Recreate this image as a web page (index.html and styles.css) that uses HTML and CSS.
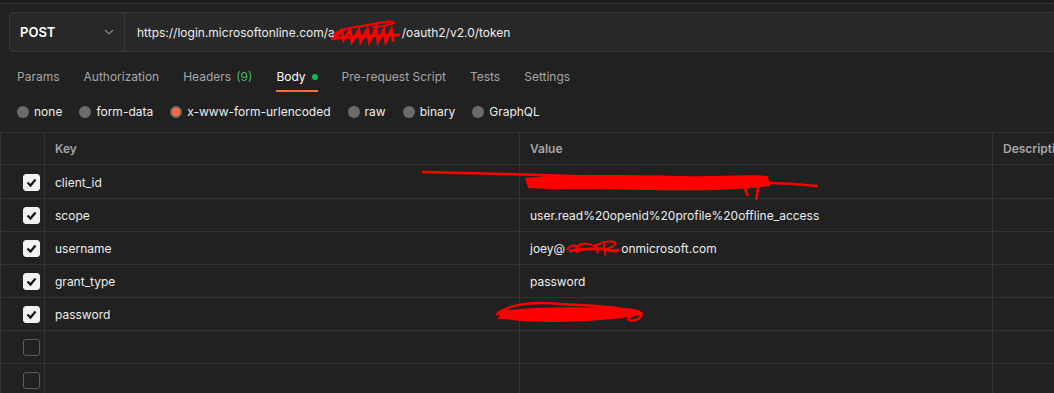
FILE: index.html
```html
<!DOCTYPE html>
<html lang="en">
<head>
  <meta charset="UTF-8" />
  <title>POST token request</title>
  <link rel="stylesheet" href="styles.css">
</head>
<body>

<!-- Top edge -->
<div class="top-strip"></div>

<!-- Request line -->
<div class="request-bar">
  <div class="method">
    <span>POST</span>
    <svg class="chevron" width="10" height="6" viewBox="0 0 10 6">
      <polyline points="1,1 5,5 9,1" fill="none" stroke="#8a8a8a" stroke-width="1.1"/>
    </svg>
  </div>
  <div class="url">https://login.microsoftonline.com/a<span class="redact">
    <svg width="74" height="28" viewBox="0 0 74 28">
      <path d="M2 17 C10 12 20 9 30 8 C42 6 52 4 60 3 C66 3 68 5 62 6 C54 8 48 9 42 9" fill="none" stroke="#ff0000" stroke-width="2"/>
      <path d="M4 20 L11 12 L13 22 L20 12 L22 24 L29 12 L31 24 L38 11 L40 24 L47 10 L49 24 L55 12 L57 24 L63 12 L65 24" fill="none" stroke="#ff0000" stroke-width="3"/>
      <path d="M0 21 C20 19 40 18 72 17" fill="none" stroke="#ff0000" stroke-width="3"/>
    </svg></span>/oauth2/v2.0/token</div>
</div>

<!-- Tabs -->
<nav class="tabs">
  <span class="tab">Params</span>
  <span class="tab">Authorization</span>
  <span class="tab">Headers <em class="count">(9)</em></span>
  <span class="tab active">Body <i class="dot"></i></span>
  <span class="tab">Pre-request Script</span>
  <span class="tab">Tests</span>
  <span class="tab">Settings</span>
</nav>

<!-- Body type -->
<div class="body-types">
  <label class="radio"><i class="circle"></i>none</label>
  <label class="radio"><i class="circle"></i>form-data</label>
  <label class="radio"><i class="circle on"></i>x-www-form-urlencoded</label>
  <label class="radio"><i class="circle"></i>raw</label>
  <label class="radio"><i class="circle"></i>binary</label>
  <label class="radio"><i class="circle"></i>GraphQL</label>
</div>

<!-- Key / value table -->
<div class="kv-table">
  <div class="cell head"></div>
  <div class="cell head">Key</div>
  <div class="cell head">Value</div>
  <div class="cell head">Descripti</div>

  <div class="cell check"><i class="box on"></i></div>
  <div class="cell">client_id</div>
  <div class="cell"></div>
  <div class="cell"></div>

  <div class="cell check"><i class="box on"></i></div>
  <div class="cell">scope</div>
  <div class="cell">user.read%20openid%20profile%20offline_access</div>
  <div class="cell"></div>

  <div class="cell check"><i class="box on"></i></div>
  <div class="cell">username</div>
  <div class="cell">joey@<span class="redact small">
    <svg width="58" height="20" viewBox="0 0 58 20">
      <path d="M2 12 C6 6 12 6 14 11 C16 15 10 16 12 10 C14 5 24 4 30 8 L40 4 C50 2 56 4 50 8 C44 11 40 12 46 13 L54 14" fill="none" stroke="#ff0000" stroke-width="2"/>
      <path d="M4 13 C14 12 26 10 40 11 C46 12 48 14 56 12" fill="none" stroke="#ff0000" stroke-width="3"/>
      <path d="M32 6 L34 16 M40 5 L42 18" fill="none" stroke="#ff0000" stroke-width="2"/>
    </svg></span>onmicrosoft.com</div>
  <div class="cell"></div>

  <div class="cell check"><i class="box on"></i></div>
  <div class="cell">grant_type</div>
  <div class="cell">password</div>
  <div class="cell"></div>

  <div class="cell check"><i class="box on"></i></div>
  <div class="cell">password</div>
  <div class="cell"></div>
  <div class="cell"></div>

  <div class="cell check"><i class="box"></i></div>
  <div class="cell"></div>
  <div class="cell"></div>
  <div class="cell"></div>

  <div class="cell check"><i class="box"></i></div>
  <div class="cell"></div>
  <div class="cell"></div>
  <div class="cell"></div>
</div>

<!-- Redaction marks drawn over the values -->
<svg class="scribbles" width="1054" height="393" viewBox="0 0 1054 393">
  <path d="M422 172 C520 174 640 178 700 180 C760 182 800 184 818 186" fill="none" stroke="#ff0000" stroke-width="2.5"/>
  <path d="M525 178 C560 174 620 175 680 176 C720 177 750 174 768 176 L770 186 C740 190 700 191 650 190 C600 189 560 190 528 188 Z" fill="#ff0000"/>
  <path d="M528 182 C600 180 680 181 760 180 M760 178 L756 200 M742 182 L748 196" fill="none" stroke="#ff0000" stroke-width="2.5"/>
  <path d="M498 311 C540 306 580 307 620 308 C635 308 640 310 644 314 C630 318 600 321 560 322 C530 322 512 321 500 318 Z" fill="#ff0000"/>
  <path d="M496 315 C510 302 540 302 560 304 C580 305 610 306 622 309 M498 318 L540 316 M630 310 C640 312 646 316 636 320 C628 322 626 318 632 316" fill="none" stroke="#ff0000" stroke-width="2.5"/>
</svg>

</body>
</html>
```

FILE: styles.css
```css
* { margin: 0; padding: 0; box-sizing: border-box; }
html, body {
  width: 100%;
  height: 100%;
  overflow: hidden;
  background: #212121;
  color: #ededed;
  font-family: Inter, "Noto Sans", sans-serif;
  font-size: 12px;
}

body { position: relative; }

.top-strip {
  height: 4px;
  background: #1c1c1c;
  border-bottom: 1px solid #313131;
}

.request-bar {
  display: flex;
  height: 40px;
  margin: 8px -40px 0 9px;
  background: #282828;
  border: 1px solid #3a3a3a;
  border-radius: 4px;
}

.method {
  width: 115px;
  display: flex;
  align-items: center;
  justify-content: space-between;
  padding: 0 10px;
  border-right: 1px solid #3a3a3a;
  font-weight: 600;
  font-size: 13px;
  color: #fff;
}

.url {
  display: flex;
  align-items: center;
  padding-left: 12px;
  color: #ededed;
  white-space: nowrap;
}

.redact {
  display: inline-flex;
  align-items: center;
  width: 71px;
  margin-left: -4px;
}
.redact.small { width: 56px; margin-left: 0; }

.tabs {
  display: flex;
  gap: 24px;
  margin: 13px 0 0 17px;
}

.tab {
  display: flex;
  align-items: center;
  padding: 4px 0 5px;
  border-bottom: 2px solid transparent;
  color: #a6a6a6;
  line-height: 16px;
}

.tab.active {
  color: #fff;
  border-bottom-color: #ff6c37;
}

.count {
  font-style: normal;
  color: #49b36b;
  margin-left: 5px;
}

.dot {
  width: 6px;
  height: 6px;
  margin-left: 6px;
  border-radius: 50%;
  background: #0cbb52;
}

.body-types {
  display: flex;
  gap: 17px;
  margin: 12px 0 0 17px;
  line-height: 16px;
}

.radio {
  display: flex;
  align-items: center;
  gap: 5px;
  color: #ededed;
}

.circle {
  width: 12px;
  height: 12px;
  border-radius: 50%;
  background: #6b6b6b;
}

.circle.on {
  background: #ff6c37;
  border: 2.5px solid #6b6b6b;
}

.kv-table {
  display: grid;
  grid-template-columns: 44px 475px 473px 200px;
  grid-auto-rows: 33px;
  margin-top: 12px;
  width: 1193px;
  border-top: 1px solid #333;
  border-left: 1px solid #333;
}

.cell {
  display: flex;
  align-items: center;
  padding-left: 10px;
  border-right: 1px solid #333;
  border-bottom: 1px solid #333;
  white-space: nowrap;
  overflow: hidden;
}

.cell.head {
  height: 32px;
  font-weight: 600;
  color: #a6a6a6;
}

.cell.check {
  justify-content: flex-end;
  padding: 0 4px 0 0;
}

.box {
  width: 17px;
  height: 17px;
  border-radius: 3px;
  border: 1px solid #5e5e5e;
}

.box.on {
  background: #f2f2f2 url("data:image/svg+xml,%3Csvg xmlns='http://www.w3.org/2000/svg' viewBox='0 0 17 17'%3E%3Cpolyline points='4.5,8.5 7.5,11.5 12.5,5.5' fill='none' stroke='%23111' stroke-width='2.2'/%3E%3C/svg%3E") center/17px no-repeat;
  border-color: #f2f2f2;
}

.scribbles {
  position: absolute;
  top: 0;
  left: 0;
  pointer-events: none;
}
```
